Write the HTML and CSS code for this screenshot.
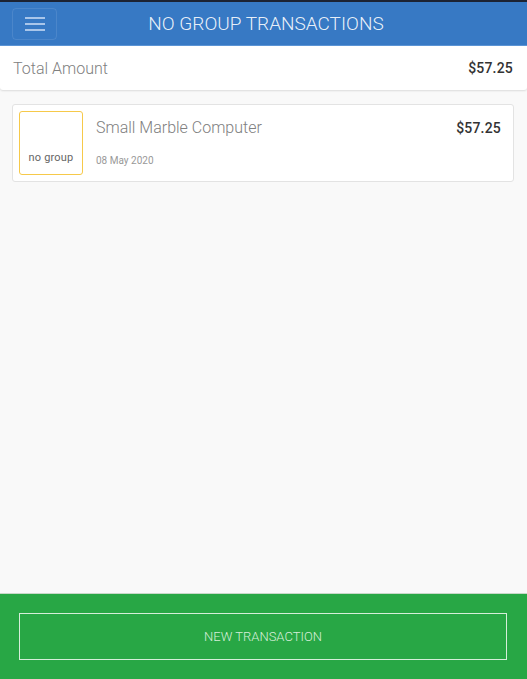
FILE: index.html
```html
<!DOCTYPE html>
<html>
<head>
<meta charset="utf-8">
<link rel="stylesheet" href="styles.css">
</head>
<body>
<div class="app">
  <div class="topstrip"></div>
  <header class="header">
    <button class="menu-btn" aria-label="menu">
      <svg width="20" height="14" viewBox="0 0 20 14"><g stroke="#a9c6ea" stroke-width="2"><line x1="0" y1="1" x2="20" y2="1"/><line x1="0" y1="7" x2="20" y2="7"/><line x1="0" y1="13" x2="20" y2="13"/></g></svg>
    </button>
    <h1 class="title">NO GROUP TRANSACTIONS</h1>
  </header>
  <div class="total">
    <span class="total-label">Total Amount</span>
    <span class="total-value">$57.25</span>
  </div>
  <main class="list">
    <div class="card">
      <div class="badge"><span>no group</span></div>
      <div class="info">
        <div class="name">Small Marble Computer</div>
        <div class="date">08 May 2020</div>
      </div>
      <div class="price">$57.25</div>
    </div>
  </main>
  <footer class="footer">
    <button class="new-btn">NEW TRANSACTION</button>
  </footer>
</div>
</body>
</html>
```

FILE: styles.css
```css
html, body {
  margin: 0;
  padding: 0;
  height: 100%;
}
body {
  font-family: Roboto, "Liberation Sans", sans-serif;
  background: #f9f9f9;
}
.app {
  display: flex;
  flex-direction: column;
  height: 679px;
}
.topstrip {
  height: 2px;
  background: #1c2333;
}
.header {
  height: 43px;
  background: #3779c4;
  border-bottom: 1px solid #5c95d6;
  display: flex;
  align-items: center;
  padding: 0 12px;
}
.menu-btn {
  width: 45px;
  height: 32px;
  border: 1px solid rgba(255,255,255,0.1);
  border-radius: 4px;
  background: transparent;
  display: flex;
  align-items: center;
  justify-content: center;
  padding: 0;
}
.title {
  flex: 1;
  margin: 0;
  text-align: center;
  font-size: 19px;
  font-weight: 300;
  color: rgba(255,255,255,0.9);
  padding-right: 40px;
}
.total {
  height: 44px;
  background: #fff;
  display: flex;
  align-items: center;
  justify-content: space-between;
  padding: 0 14px 0 13px;
  box-shadow: 0 1px 2px rgba(0,0,0,0.12);
  border-radius: 0 0 3px 3px;
}
.total-label {
  font-size: 16px;
  font-weight: 300;
  color: #808080;
}
.total-value {
  font-size: 14px;
  font-weight: 500;
  color: #333;
  letter-spacing: 0.2px;
}
.list {
  flex: 1;
  padding: 14px 13px 0 12px;
}
.card {
  background: #fff;
  border: 1px solid #e3e3e3;
  border-radius: 3px;
  padding: 6px 12px 6px 6px;
  display: flex;
  align-items: flex-start;
}
.badge {
  width: 62px;
  height: 62px;
  border: 1px solid #f6c94a;
  border-radius: 3px;
  display: flex;
  align-items: flex-end;
  justify-content: center;
}
.badge span {
  font-size: 11px;
  color: #666;
  letter-spacing: 0.2px;
  margin-bottom: 10px;
}
.info {
  flex: 1;
  padding-left: 13px;
}
.name {
  font-size: 16px;
  font-weight: 300;
  color: #808080;
  margin-top: 7px;
}
.date {
  font-size: 10px;
  color: #999;
  margin-top: 18px;
}
.price {
  font-size: 14px;
  font-weight: 500;
  color: #333;
  letter-spacing: 0.2px;
  margin-top: 9px;
}
.footer {
  height: 86px;
  background: #28a745;
  border-top: 1px solid #c8d8c8;
  padding: 19px 20px 0 19px;
  box-sizing: border-box;
}
.new-btn {
  width: 100%;
  height: 47px;
  background: transparent;
  border: 1px solid #d6eed9;
  color: #d6eed9;
  font-family: Roboto, "Liberation Sans", sans-serif;
  font-size: 13px;
  font-weight: 300;
}
```
